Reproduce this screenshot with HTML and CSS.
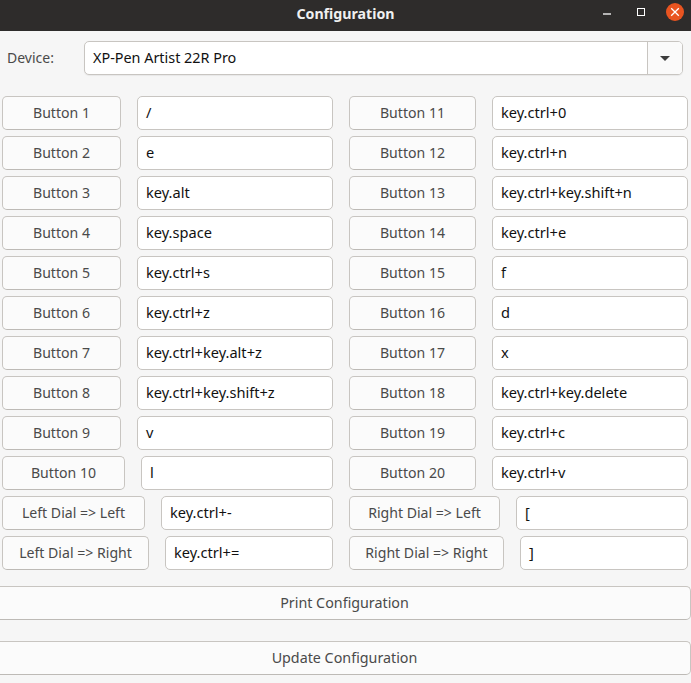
FILE: index.html
```html
<!DOCTYPE html>
<html lang="en">
<head>
<meta charset="utf-8">
<title>Configuration</title>
<link rel="stylesheet" href="styles.css">
</head>
<body>
<div class="window">
  <header class="titlebar">
    <span class="title">Configuration</span>
    <div class="controls">
      <svg class="ctl" width="16" height="16" viewBox="0 0 16 16"><path d="M3 10h8" stroke="#fff" stroke-width="1.300"/></svg>
      <svg class="ctl" width="16" height="16" viewBox="0 0 16 16"><rect x="4.500" y="4.500" width="7" height="7" fill="none" stroke="#fff"/></svg>
      <svg class="close" width="18" height="18" viewBox="0 0 18 18"><circle cx="9" cy="9" r="9" fill="#e95420"/><path d="M5.200 5.200l7.600 7.600M12.800 5.200l-7.600 7.600" stroke="#fff" stroke-width="1.300"/></svg>
    </div>
  </header>
  <div class="device">
    <span class="device-label">Device:</span>
    <div class="combo">
      <span class="combo-value">XP-Pen Artist 22R Pro</span>
      <span class="combo-arrow"><svg width="10" height="5" viewBox="0 0 10 5"><path d="M0 0h10L5 5z" fill="#3d3d3d"/></svg></span>
    </div>
  </div>
  <div class="grid">
    <div class="pair"><button class="btn w119">Button 1</button><div class="field">/</div></div>
    <div class="pair"><button class="btn w127">Button 11</button><div class="field">key.ctrl+0</div></div>
    <div class="pair"><button class="btn w119">Button 2</button><div class="field">e</div></div>
    <div class="pair"><button class="btn w127">Button 12</button><div class="field">key.ctrl+n</div></div>
    <div class="pair"><button class="btn w119">Button 3</button><div class="field">key.alt</div></div>
    <div class="pair"><button class="btn w127">Button 13</button><div class="field">key.ctrl+key.shift+n</div></div>
    <div class="pair"><button class="btn w119">Button 4</button><div class="field">key.space</div></div>
    <div class="pair"><button class="btn w127">Button 14</button><div class="field">key.ctrl+e</div></div>
    <div class="pair"><button class="btn w119">Button 5</button><div class="field">key.ctrl+s</div></div>
    <div class="pair"><button class="btn w127">Button 15</button><div class="field">f</div></div>
    <div class="pair"><button class="btn w119">Button 6</button><div class="field">key.ctrl+z</div></div>
    <div class="pair"><button class="btn w127">Button 16</button><div class="field">d</div></div>
    <div class="pair"><button class="btn w119">Button 7</button><div class="field">key.ctrl+key.alt+z</div></div>
    <div class="pair"><button class="btn w127">Button 17</button><div class="field">x</div></div>
    <div class="pair"><button class="btn w119">Button 8</button><div class="field">key.ctrl+key.shift+z</div></div>
    <div class="pair"><button class="btn w127">Button 18</button><div class="field">key.ctrl+key.delete</div></div>
    <div class="pair"><button class="btn w119">Button 9</button><div class="field">v</div></div>
    <div class="pair"><button class="btn w127">Button 19</button><div class="field">key.ctrl+c</div></div>
    <div class="pair"><button class="btn w123">Button 10</button><div class="field">l</div></div>
    <div class="pair"><button class="btn w127">Button 20</button><div class="field">key.ctrl+v</div></div>
    <div class="pair"><button class="btn w143">Left Dial =&gt; Left</button><div class="field">key.ctrl+-</div></div>
    <div class="pair"><button class="btn w151">Right Dial =&gt; Left</button><div class="field">[</div></div>
    <div class="pair"><button class="btn w147">Left Dial =&gt; Right</button><div class="field">key.ctrl+=</div></div>
    <div class="pair"><button class="btn w155">Right Dial =&gt; Right</button><div class="field">]</div></div>
  </div>
  <div class="actions">
    <button class="btn wide">Print Configuration</button>
    <button class="btn wide">Update Configuration</button>
  </div>
</div>
</body>
</html>
```
FILE: styles.css
```css
* { box-sizing: border-box; }
html, body { margin: 0; padding: 0; }
body {
  width: 691px;
  height: 683px;
  overflow: hidden;
  background: #f6f6f6;
  font-family: "Noto Sans", "Open Sans", sans-serif;
  font-size: 14px;
  color: #3d3d3d;
}
.window { display: flex; flex-direction: column; height: 683px; }
.titlebar {
  position: relative;
  height: 31px;
  flex: none;
  display: flex;
  align-items: center;
  justify-content: center;
  padding-bottom: 4px;
  background: #2e2c2b;
}
.title { color: #f0f0f0; font-weight: 700; font-size: 14.2px; }
.controls {
  position: absolute;
  right: 7px;
  top: 3px;
  display: flex;
  align-items: center;
  gap: 17px;
  height: 18px;
}
.ctl { display: block; }
.close { display: block; }
.device {
  display: flex;
  align-items: center;
  height: 34px;
  margin: 10px 8px 0 7px;
}
.device-label { width: 77px; flex: none; color: #4a4a4a; padding-bottom: 2px; }
.combo {
  flex: 1;
  height: 34px;
  display: flex;
  align-items: stretch;
  background: #fff;
  border: 1px solid #c8c5c1;
  border-radius: 5px;
  box-shadow: 0 1px 1px rgba(0,0,0,.06);
}
.combo-value { flex: 1; padding-left: 8px; line-height: 31px; color: #111; font-size: 14.4px; }
.combo-arrow {
  width: 35px;
  display: flex;
  align-items: center;
  justify-content: center;
  border-left: 1px solid #c8c5c1;
  background: #fafafa;
  border-radius: 0 4px 4px 0;
}
.grid {
  display: grid;
  grid-template-columns: 331px 339px;
  column-gap: 16px;
  row-gap: 6px;
  margin: 21px 3px 0 2px;
}
.pair { display: flex; gap: 16px; height: 34px; }
.btn {
  flex: none;
  height: 34px;
  padding: 0 0 2px;
  background: #fbfbfb;
  border: 1px solid #c8c5c1;
  border-bottom-color: #bdbab6;
  border-radius: 5px;
  font: inherit;
  font-size: 14.1px;
  color: #4a4a4a;
}
.w119 { width: 119px; }
.w123 { width: 123px; }
.w127 { width: 127px; }
.w143 { width: 143px; }
.w147 { width: 147px; }
.w151 { width: 151px; }
.w155 { width: 155px; }
.field {
  flex: 1;
  min-width: 0;
  height: 34px;
  padding-left: 8px;
  line-height: 30px;
  background: #fff;
  border: 1px solid #c8c5c1;
  border-radius: 5px;
  color: #111;
  font-size: 14.6px;
}
.actions {
  display: flex;
  flex-direction: column;
  gap: 21px;
  margin-top: 16px;
}
.btn.wide { width: 697px; margin-left: -6px; padding-left: 4px; font-size: 14.3px; }
```
